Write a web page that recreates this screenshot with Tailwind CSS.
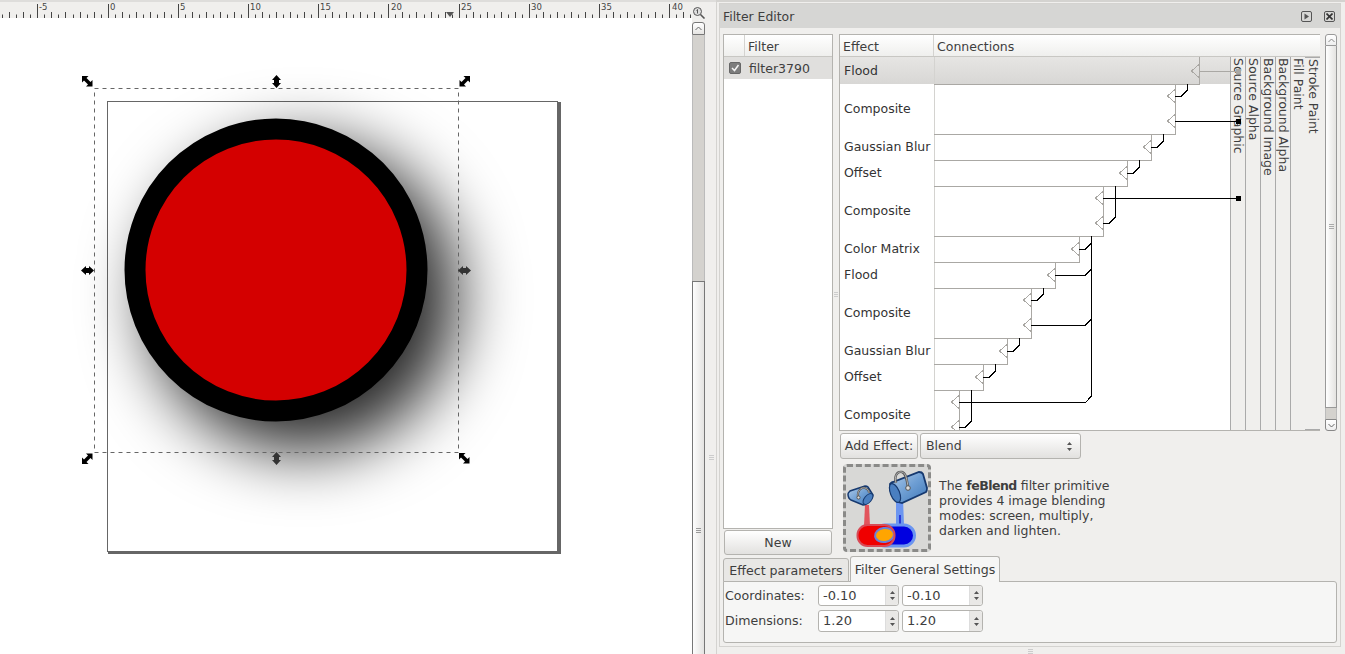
<!DOCTYPE html>
<html lang="en">
<head>
<meta charset="UTF-8">
<script src="https://cdn.jsdelivr.net/npm/@tailwindcss/browser@4"></script>
<title>Filter Editor</title>
</head>
<body class="bg-[#f0efed] overflow-hidden">
<div class="flex w-[1345px] h-[654px] overflow-hidden font-['DejaVu_Sans',sans-serif] text-[12.5px] text-[#3e3e3e]">

  <!-- drawing area -->
  <div class="w-[716px] h-full flex flex-col shrink-0">
    <div class="h-[18px] w-full border-t-2 border-[#dedddb] shrink-0 relative">
      <svg id="ruler" width="692" height="16" viewBox="0 2 692 16" class="block">
        <path id="ticks" stroke="#444" stroke-width="1" fill="none" d=""/>
        <g font-family="DejaVu Sans" font-size="8.5" fill="#444">
          <text x="39" y="10">-5</text><text x="110" y="10">0</text><text x="180" y="10">5</text>
          <text x="250" y="10">10</text><text x="320" y="10">15</text><text x="391" y="10">20</text>
          <text x="461" y="10">25</text><text x="531" y="10">30</text><text x="601" y="10">35</text><text x="672" y="10">40</text>
        </g>
        <path d="M446 12h8l-4 5z" fill="#555"/>
      </svg>
      <svg class="absolute left-[692px] top-[4px]" width="14" height="13" viewBox="0 0 14 13" fill="none" stroke="#555">
        <circle cx="5.5" cy="5.5" r="4" fill="#ddd"/><path d="M5.5 3.5v4M4.5 4.5l1-1" stroke-width="1"/><path d="M8.5 8.5l4 4" stroke-width="1.6"/>
      </svg>
    </div>
    <div class="flex flex-1 min-h-0">
      <svg width="692" height="636" viewBox="0 18 692 636" class="block bg-white shrink-0">
        <defs>
          <filter id="blur" x="-50%" y="-50%" width="200%" height="200%"><feGaussianBlur stdDeviation="33"/></filter>
        </defs>
        <rect x="108" y="102" width="453" height="452" fill="#666"/>
        <rect x="107.5" y="101.5" width="450" height="450" fill="#fff" stroke="#666"/>
        <circle cx="303" cy="297" r="154" fill="#000" fill-opacity=".85" filter="url(#blur)"/>
        <circle cx="276" cy="270" r="141" fill="#d40000" stroke="#000" stroke-width="21"/>
        <rect x="94.5" y="88.5" width="364" height="364" fill="none" stroke="#666" stroke-dasharray="4 4"/>
        <g fill="#000">
          <path d="M82 76h6.500l-2 2 4 4 2-2v6.500h-6.500l2-2-4-4-2 2z"/>
          <path d="M82 76h6.500l-2 2 4 4 2-2v6.500h-6.500l2-2-4-4-2 2z" transform="matrix(-1 0 0 1 552 0)"/>
          <path d="M82 76h6.500l-2 2 4 4 2-2v6.500h-6.500l2-2-4-4-2 2z" transform="matrix(1 0 0 -1 0 540)"/>
          <path d="M82 76h6.500l-2 2 4 4 2-2v6.500h-6.500l2-2-4-4-2 2z" transform="translate(377,377)"/>
          <path d="M276.500 75l4.500 5h-2v3h2l-4.500 5-4.500-5h2v-3h-2z"/>
          <path d="M276.500 452l4.500 5h-2v3h2l-4.500 5-4.500-5h2v-3h-2z" fill="#333"/>
          <path d="M81 270.500l5-4.500v2h3v-2l5 4.500-5 4.500v-2h-3v2z"/>
          <path d="M458 270.500l5-4.500v2h3v-2l5 4.500-5 4.500v-2h-3v2z" fill="#333"/>
        </g>
      </svg>
      <!-- vertical scrollbar -->
      <div class="w-[13px] h-full flex flex-col shrink-0 pt-[4px]">
        <div class="h-[13px] rounded-t-[3px] border border-[#777] bg-gradient-to-b from-white to-[#e6e5e3] flex items-center justify-center">
          <svg width="7" height="5" viewBox="0 0 7 5" fill="none" stroke="#666"><path d="M.5 4l3-3 3 3"/></svg>
        </div>
        <div class="h-[246px] bg-[#d4d2ce] border-x border-[#bbb]"></div>
        <div class="flex-1 border-x border-t border-[#777] bg-gradient-to-r from-[#fdfdfd] to-[#e4e3e1] relative">
          <div class="absolute left-[3px] top-[246px] w-[5px] h-[5px] border-y border-[#999]"><div class="h-px mt-[1px] bg-[#999]"></div></div>
        </div>
      </div>
      <div class="flex-1 relative">
        <div class="absolute left-[4px] top-[437px] w-[5px] h-[5px] border-y border-[#ccc]"><div class="h-px mt-[1px] bg-[#ccc]"></div></div>
      </div>
    </div>
  </div>

  <!-- filter editor dock -->
  <div class="flex-1 h-full border-l border-t-2 border-[#d4d3d0] pl-[2px] pr-[4px] pt-[1px] relative min-w-0">
    <div class="border border-[#d4d3d0] h-[644px]">
      <div class="h-[24px] bg-[#d6d6d4] flex items-center pl-[3px] pr-[4px] text-[12.4px]">
        <span class="flex-1 pt-[2px]">Filter Editor</span>
        <div class="w-[11px] h-[11px] rounded-[2px] border border-[#555] flex items-center justify-center mr-[12px]"><svg width="7" height="7" viewBox="0 0 7 7"><path d="M1.500 .5l4.500 3-4.500 3z" fill="#555"/></svg></div>
        <div class="w-[11px] h-[11px] rounded-[2px] border border-[#555] flex items-center justify-center mr-[1px]"><svg width="7" height="7" viewBox="0 0 7 7" fill="none" stroke="#333" stroke-width="1.600"><path d="M.5 .5l6 6M6.500 .5l-6 6"/></svg></div>
      </div>

      <div class="pl-[3px] pr-[3px] pt-[6px]">
        <div class="flex h-[521px]">
          <!-- filter list -->
          <div class="w-[110px] shrink-0 flex flex-col">
            <div class="h-[495px] border border-[#b4b3af] bg-white">
              <div class="h-[22px] flex bg-gradient-to-b from-white to-[#efefed] border-b border-[#c8c7c3]">
                <div class="w-[21px] border-r border-[#d4d3d0]"></div>
                <div class="pl-[3px] leading-[23px]">Filter</div>
              </div>
              <div class="h-[22px] flex items-center bg-[#e0dfdd]">
                <div class="w-[21px] flex justify-center">
                  <svg width="12" height="12" viewBox="0 0 12 12"><rect x=".5" y=".5" width="11" height="11" rx="1.500" fill="#7c7c7c" stroke="#666"/><path d="M3 6l2.500 2.500L9.500 3" fill="none" stroke="#f4f4f4" stroke-width="1.500"/></svg>
                </div>
                <div class="pl-[4px] pt-[3px]">filter3790</div>
              </div>
            </div>
            <button class="mt-[1px] ml-[1px] w-[108px] h-[25px] rounded-[3px] border border-[#b4b3af] bg-gradient-to-b from-white to-[#e2e1df] pt-[2px]">New</button>
          </div>

          <!-- handle -->
          <div class="w-[6px] shrink-0 flex items-center justify-center"><div class="w-[4px] h-[5px] border-y border-[#ccc]"><div class="h-px mt-[1px] bg-[#ccc]"></div></div></div>

          <!-- effects -->
          <div class="flex-1 min-w-0 flex flex-col">
            <div class="flex h-[397px]">
              <div class="w-[481px] border border-[#b4b3af] border-r-0 bg-white flex flex-col relative">
                <div class="h-[22px] flex bg-gradient-to-b from-white to-[#efefed] border-b border-[#c8c7c3] shrink-0">
                  <div class="w-[94px] pl-[3px] leading-[23px] border-r border-[#d4d3d0]">Effect</div>
                  <div class="pl-[3px] leading-[23px]">Connections</div>
                </div>
                <div class="flex flex-1 min-h-0">
                  <div class="w-[94px] shrink-0 text-[#333] pl-[4px] flex flex-col overflow-hidden">
                    <div class="h-[27px] -ml-[4px] pl-[4px] pt-[2px] flex items-center bg-gradient-to-b from-[#e6e5e3] to-[#d8d7d5] shrink-0">Flood</div>
                    <div class="h-[50px] flex items-center shrink-0">Composite</div>
                    <div class="h-[26px] flex items-center shrink-0">Gaussian Blur</div>
                    <div class="h-[26px] flex items-center shrink-0">Offset</div>
                    <div class="h-[50px] flex items-center shrink-0">Composite</div>
                    <div class="h-[26px] flex items-center shrink-0">Color Matrix</div>
                    <div class="h-[26px] flex items-center shrink-0">Flood</div>
                    <div class="h-[50px] flex items-center shrink-0">Composite</div>
                    <div class="h-[26px] flex items-center shrink-0">Gaussian Blur</div>
                    <div class="h-[26px] flex items-center shrink-0">Offset</div>
                    <div class="h-[50px] flex items-center shrink-0">Composite</div>
                  </div>
                  <div class="flex-1 min-w-0 relative flex">
                    <div class="flex-1"><div class="h-[27px] bg-gradient-to-b from-[#e6e5e3] to-[#d8d7d5]"></div></div>
                    <div class="flex">
                      <div class="w-[15px] pt-px border-l border-[#aaa] bg-[#f0efed] [writing-mode:vertical-rl] leading-[14px] whitespace-nowrap overflow-hidden">Source Graphic</div>
                      <div class="w-[15px] pt-px border-l border-[#aaa] bg-[#f0efed] [writing-mode:vertical-rl] leading-[14px] whitespace-nowrap overflow-hidden">Source Alpha</div>
                      <div class="w-[15px] pt-px border-l border-[#aaa] bg-[#f0efed] [writing-mode:vertical-rl] leading-[14px] whitespace-nowrap overflow-hidden">Background Image</div>
                      <div class="w-[15px] pt-px border-l border-[#aaa] bg-[#f0efed] [writing-mode:vertical-rl] leading-[14px] whitespace-nowrap overflow-hidden">Background Alpha</div>
                      <div class="w-[15px] pt-px border-l border-[#aaa] bg-[#f0efed] [writing-mode:vertical-rl] leading-[14px] whitespace-nowrap overflow-hidden">Fill Paint</div>
                      <div class="w-[15px] pt-px border-x border-[#aaa] bg-[#f0efed] [writing-mode:vertical-rl] leading-[14px] whitespace-nowrap overflow-hidden">Stroke Paint</div>
                    </div>
                    <svg class="absolute left-0 top-0" width="386" height="373" viewBox="934 57 386 373" fill="none" shape-rendering="crispEdges">
                      <path d="M934.500 57V430" stroke="#d4d3d0"/>
                      <g stroke="#aaa8a4">
                        <path d="M934 84.500H1199.500V57"/>
                        <path d="M934 134.500H1175.500V84"/>
                        <path d="M934 160.500H1151.500V134"/>
                        <path d="M934 186.500H1127.500V160"/>
                        <path d="M934 236.500H1103.500V186"/>
                        <path d="M934 262.500H1079.500V236"/>
                        <path d="M934 288.500H1055.500V262"/>
                        <path d="M934 338.500H1031.500V288"/>
                        <path d="M934 364.500H1007.500V338"/>
                        <path d="M934 390.500H983.500V364"/>
                        <path d="M959.500 390V431"/>
                        <path d="M1199.500 64l-8 7 8 7M1175.500 89l-8 7 8 7M1175.500 114l-8 7 8 7M1151.500 140l-8 7 8 7M1127.500 166l-8 7 8 7M1103.500 191l-8 7 8 7M1103.500 216l-8 7 8 7M1079.500 242l-8 7 8 7M1055.500 268l-8 7 8 7M1031.500 293l-8 7 8 7M1031.500 318l-8 7 8 7M1007.500 344l-8 7 8 7M983.500 370l-8 7 8 7M959.500 395l-8 7 8 7M959.500 420l-8 7 8 7"/>
                        <path d="M1200 71.500H1238"/>
                      </g>
                      <rect x="1236" y="69" width="5" height="5" fill="#aaa8a4"/>
                      <g stroke="#000">
                        <path d="M1175 96.500h6l6-6V84"/>
                        <path d="M1175 121.500H1238"/>
                        <path d="M1151 147.500h6l6-6V134"/>
                        <path d="M1127 173.500h6l6-6V160"/>
                        <path d="M1103 198.500H1238"/>
                        <path d="M1103 223.500h6l6-6V186"/>
                        <path d="M1079 249.500h6l6-6V236"/>
                        <path d="M1091.500 236V396l-6 6.500H959"/>
                        <path d="M1055 275.500h30l6-6"/>
                        <path d="M1031 300.500h6l6-6V288"/>
                        <path d="M1031 325.500h54l6-6"/>
                        <path d="M1007 351.500h6l6-6V338"/>
                        <path d="M983 377.500h6l6-6V364"/>
                        <path d="M959 427.500h6l6-6V390"/>
                      </g>
                      <rect x="1236" y="119" width="5" height="5" fill="#000"/>
                      <rect x="1236" y="196" width="5" height="5" fill="#000"/>
                    </svg>
                  </div>
                </div>
              </div>
              <!-- tree scrollbar -->
              <div class="ml-[5px] w-[12px] flex flex-col">
                <div class="h-[12px] rounded-t-[3px] border border-[#999] bg-gradient-to-b from-white to-[#eee] flex items-center justify-center"><svg width="7" height="5" viewBox="0 0 7 5" fill="none" stroke="#888"><path d="M.5 4l3-3 3 3"/></svg></div>
                <div class="h-[362px] border-x border-b border-[#999] bg-gradient-to-r from-white to-[#e4e3e1] flex items-center justify-center"><div class="w-[5px] h-[5px] border-y border-[#aaa]"><div class="h-px mt-[1px] bg-[#aaa]"></div></div></div>
                <div class="h-[11px] bg-[#d4d2ce] border-x border-[#bbb]"></div>
                <div class="h-[12px] rounded-b-[3px] border border-[#888] bg-gradient-to-b from-white to-[#eee] flex items-center justify-center"><svg width="7" height="5" viewBox="0 0 7 5" fill="none" stroke="#666"><path d="M.5 1l3 3 3-3"/></svg></div>
              </div>
            </div>

            <div class="flex mt-[2px] ml-[1px] h-[26px]">
              <button class="w-[78px] rounded-[3px] border border-[#b4b3af] bg-gradient-to-b from-white to-[#e2e1df]">Add Effect:</button>
              <div class="ml-[2px] w-[161px] rounded-[3px] border border-[#b4b3af] bg-gradient-to-b from-white to-[#e2e1df] flex items-center pl-[5px] pr-[7px]">
                <span class="flex-1">Blend</span>
                <svg width="7" height="11" viewBox="0 0 7 11" fill="#555"><path d="M3.500 1l2.500 3h-5zM3.500 10l2.500-3h-5z"/></svg>
              </div>
            </div>

            <div class="flex mt-[5px] ml-[4px]">
              <div class="w-[88px] h-[88px] rounded-[4px] bg-[#d8d8d6] border-[3px] border-dashed border-[#8a8a88] shrink-0 overflow-hidden">
                <svg width="82" height="82" viewBox="846 467 82 82">
                  <defs>
                    <linearGradient id="bk" x1="0" y1="0" x2="1" y2="1"><stop offset="0" stop-color="#b4cde8"/><stop offset=".5" stop-color="#6f9fd4"/><stop offset="1" stop-color="#3f78b8"/></linearGradient>
                  </defs>
                  <!-- streams -->
                  <path d="M865 505h4l1 21h-6z" fill="#e2545c"/>
                  <path d="M896 498h7l1 27h-8z" fill="#6b95f0"/>
                  <path d="M900 515V526" stroke="#0000c8" stroke-width="1.200"/>
                  <!-- blobs -->
                  <rect x="874.500" y="525" width="40" height="21" rx="10.500" fill="#0000e0" stroke="#6b95f0" stroke-width="3"/>
                  <rect x="857.500" y="525" width="37" height="21" rx="10" fill="#f00000"/>
                  <ellipse cx="884.500" cy="535" rx="9.500" ry="7" transform="rotate(-8 884.500 535)" fill="#ffa500" stroke="#6b80d8" stroke-width="2"/>
                  <rect x="857.500" y="525" width="37" height="21" rx="10" fill="none" stroke="#d84a56" stroke-width="2"/>
                  <!-- small bucket -->
                  <path d="M848 494c0-1 1-2 2-3l15-5c1 0 2 0 3 1l5 8c0 2-1 3-2 4l-5 5c-1 1-2 1-3 1l-12-5c-2-1-3-3-3-6z" fill="url(#bk)" stroke="#16396f" stroke-width="1.500"/>
                  <ellipse cx="868" cy="499" rx="3.500" ry="6.500" transform="rotate(40 868 499)" fill="#4a7fc0" stroke="#16396f"/>
                  <path d="M858 497c-1-6 3-10 7-9 3 1 4 3 4 5" fill="none" stroke="#555" stroke-width="2"/>
                  <path d="M858 497c-1-6 3-10 7-9 3 1 4 3 4 5" fill="none" stroke="#ddd" stroke-width=".6"/>
                  <circle cx="858.500" cy="497.500" r="1.600" fill="#ddd" stroke="#555"/>
                  <!-- big bucket -->
                  <path d="M890 484c1-1 2-2 3-2l26-10c2 0 3 0 4 2l4 14c0 2 0 3-1 4l-24 11-4-1c-4-3-8-11-8-18z" fill="url(#bk)" stroke="#16396f" stroke-width="1.800"/>
                  <ellipse cx="895" cy="493" rx="4.500" ry="10" transform="rotate(-22 895 493)" fill="#4a7fc0" stroke="#16396f" stroke-width="1.200"/>
                  <path d="M896 483c-2-7 1-12 6-11 4 1 5 8 6 15" fill="none" stroke="#555" stroke-width="2.400"/>
                  <path d="M896 483c-2-7 1-12 6-11 4 1 5 8 6 15" fill="none" stroke="#ddd" stroke-width=".7"/>
                  <circle cx="908" cy="488" r="2.300" fill="#ddd" stroke="#555"/>
                </svg>
              </div>
              <p class="ml-[8px] mt-[14px] leading-[15px] w-[180px]">The <b class="tracking-[-0.5px]">feBlend</b> filter primitive provides 4 image blending modes: screen, multiply, darken and lighten.</p>
            </div>
          </div>
        </div>

        <!-- tabs -->
        <div class="flex items-end h-[27px] pl-0 relative z-10">
          <div class="w-[126px] h-[24px] pt-[2px] rounded-t-[3px] border border-[#b4b3af] bg-[#e8e7e5] flex items-center justify-center text-[12.6px]">Effect parameters</div>
          <div class="ml-[1px] w-[150px] h-[26px] pt-[2px] rounded-t-[3px] border border-b-0 border-[#b4b3af] bg-[#f6f6f5] flex items-center justify-center text-[12.6px]">Filter General Settings</div>
        </div>
        <div class="h-[62px] -mt-px rounded-b-[3px] rounded-tr-[3px] border border-[#b4b3af] bg-[#f6f6f5] pl-[1px] pt-[3px]">
          <div class="flex items-center h-[21px]">
            <span class="w-[93px] text-[12.6px] pt-[2px]">Coordinates:</span>
            <div class="w-[81px] h-[21px] rounded-[3px] border border-[#b4b3af] bg-white flex text-[13px]"><span class="flex-1 pl-[4px] leading-[20px]">-0.10</span><span class="w-[13px] border-l border-[#ddd] bg-[#e9e8e6] rounded-r-[3px] flex items-center justify-center"><svg width="7" height="11" viewBox="0 0 7 11" fill="#555"><path d="M3.500 1l2.500 3h-5zM3.500 10l2.500-3h-5z"/></svg></span></div>
            <div class="ml-[3px] w-[81px] h-[21px] rounded-[3px] border border-[#b4b3af] bg-white flex text-[13px]"><span class="flex-1 pl-[4px] leading-[20px]">-0.10</span><span class="w-[13px] border-l border-[#ddd] bg-[#e9e8e6] rounded-r-[3px] flex items-center justify-center"><svg width="7" height="11" viewBox="0 0 7 11" fill="#555"><path d="M3.500 1l2.500 3h-5zM3.500 10l2.500-3h-5z"/></svg></span></div>
          </div>
          <div class="flex items-center h-[22px] mt-[4px]">
            <span class="w-[93px] text-[12.6px]">Dimensions:</span>
            <div class="w-[81px] h-[22px] rounded-[3px] border border-[#b4b3af] bg-white flex text-[13px]"><span class="flex-1 pl-[4px] leading-[20px]">1.20</span><span class="w-[13px] border-l border-[#ddd] bg-[#e9e8e6] rounded-r-[3px] flex items-center justify-center"><svg width="7" height="11" viewBox="0 0 7 11" fill="#555"><path d="M3.500 1l2.500 3h-5zM3.500 10l2.500-3h-5z"/></svg></span></div>
            <div class="ml-[3px] w-[81px] h-[22px] rounded-[3px] border border-[#b4b3af] bg-white flex text-[13px]"><span class="flex-1 pl-[4px] leading-[20px]">1.20</span><span class="w-[13px] border-l border-[#ddd] bg-[#e9e8e6] rounded-r-[3px] flex items-center justify-center"><svg width="7" height="11" viewBox="0 0 7 11" fill="#555"><path d="M3.500 1l2.500 3h-5zM3.500 10l2.500-3h-5z"/></svg></span></div>
          </div>
        </div>
      </div>
    </div>
    <div class="absolute left-[311px] top-[647px] w-[5px] h-[5px] border-y border-[#ccc]"><div class="h-px mt-[1px] bg-[#ccc]"></div></div>
  </div>
</div>
<script>
  // ruler ticks: half units every 7px, 0 sits at x=107
  let d = ''
  for (let i = -15; i < 100; i++) {
    const x = Math.round(107.6 + i * 7.02) + 0.5
    const top = i % 10 == 0 ? 4 : (i % 2 == 0 ? 12 : 14.5)
    d += `M${x} ${top}V18`
  }
  document.querySelector('#ticks').setAttribute('d', d)
</script>
</body>
</html>
